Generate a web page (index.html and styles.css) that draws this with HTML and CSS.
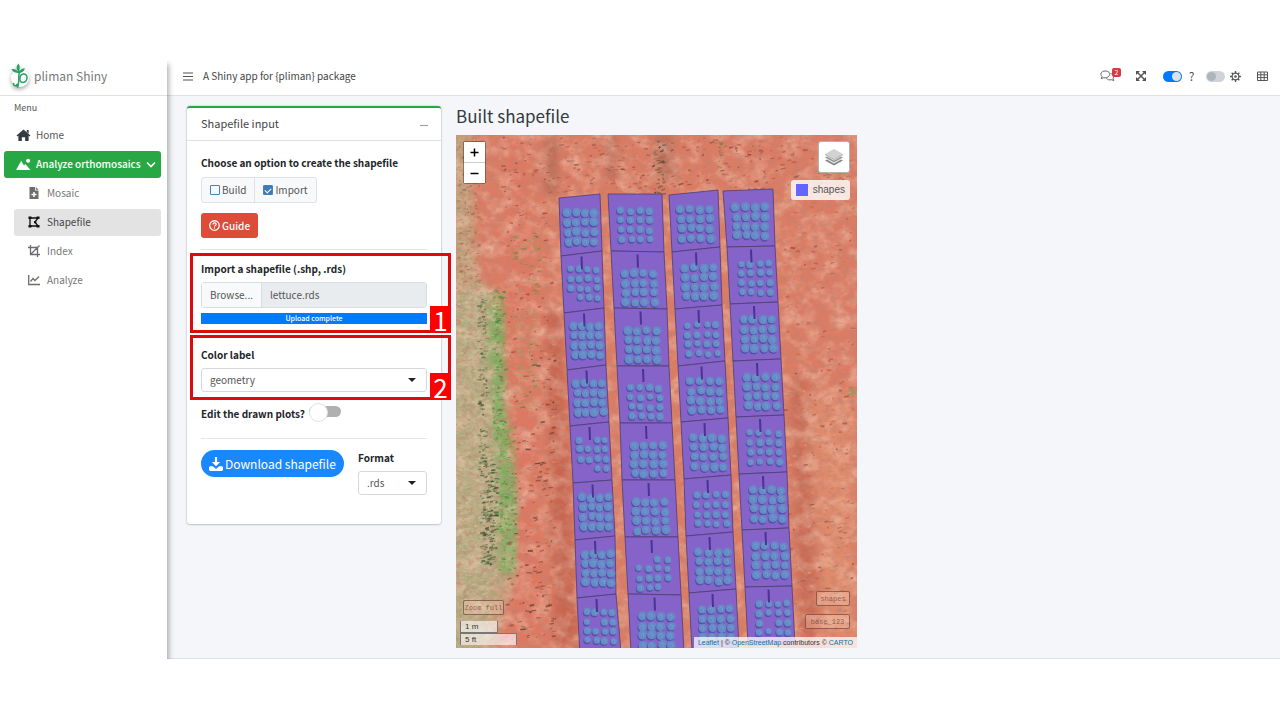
FILE: index.html
```html
<!DOCTYPE html>
<html lang="en">
<head>
<meta charset="utf-8">
<title>pliman Shiny</title>
<link rel="stylesheet" href="styles.css">
</head>
<body>
<div class="app">
  <aside class="sidebar">
    <a class="brand" href="#">
      <svg class="brand-logo" viewBox="0 0 20 26" aria-hidden="true">
        <circle cx="10" cy="15" r="9" fill="#fff"/>
        <g fill="none" stroke="#27a166" stroke-linecap="round">
          <path d="M8 24c-2-1-2-2.500 0-3M9.500 9c-1.500 4 0 9-1.500 14" stroke-width="1.500"/>
          <path d="M10 17c-1-7 7-8 7-2.500s-6 6-7 3M7.500 22c-2 1.500-4 .5-4-1.500" stroke-width="1.500"/>
        </g>
        <path d="M9 10C5 10 3 9 1.500 6c3 0 5 .5 6.500 2.500C6 6 6 3 8.500.500c1.500 2.500 1.500 5 .8 7.500C11 6 12.500 5.500 15 5.500 13.500 9 11.500 10 9 10z" fill="#27a166"/>
      </svg>
      <span>pliman Shiny</span>
    </a>
    <nav class="menu">
      <p class="menu-title">Menu</p>
      <a class="item" href="#">
        <svg class="icon home-icon" viewBox="0 0 16 14" aria-hidden="true"><path d="M8 .500 15.500 7l-.9 1-1.100-.9V13H9.800V9H6.200v4H2.500V7.100L1.400 8 .5 7z" fill="#343a40"/><path d="M11.500 1h2v4l-2-2z" fill="#343a40"/></svg>
        <span>Home</span>
      </a>
      <a class="item item-open" href="#">
        <svg class="icon home-icon" viewBox="0 0 16 14" aria-hidden="true"><path d="M0 13 5.500 3 8.500 8l1.500-1.500L15.500 13z" fill="#fff"/><circle cx="13" cy="3" r="2.200" fill="#fff"/></svg>
        <span>Analyze orthomosaics</span>
        <svg class="chevron" viewBox="0 0 10 7" aria-hidden="true"><path d="M1 1.500 5 5.500 9 1.500" fill="none" stroke="#fff" stroke-width="1.600"/></svg>
      </a>
      <a class="item sub" href="#">
        <svg class="icon" viewBox="0 0 12 12" aria-hidden="true"><path d="M1.500 0H7v3.500h3.500V12h-9z" fill="#6c6c6c"/><path d="M7.800 0 10.500 2.700H7.800z" fill="#6c6c6c"/><path d="M6 5v5M3.500 7.500h5" stroke="#fff" stroke-width="1.500"/></svg>
        <span>Mosaic</span>
      </a>
      <a class="item sub sub-active" href="#">
        <svg class="icon" viewBox="0 0 12 12" aria-hidden="true"><path d="M2 2h8L7 6l3 4H2z" fill="none" stroke="#111" stroke-width="1.300"/><path d="M.5.500h3v2.500h-3zM8.500.500h3v2.500h-3zM.5 9h3v2.500h-3zM8.500 9h3v2.500h-3zM6 5h2.200v2.200H6z" fill="#111"/></svg>
        <span>Shapefile</span>
      </a>
      <a class="item sub" href="#">
        <svg class="icon" viewBox="0 0 12 12" aria-hidden="true"><path d="M2.500 0v9.500H12M0 2.500h9.500V12M2.500 9.500 11.500.500" fill="none" stroke="#6c6c6c" stroke-width="1.300"/></svg>
        <span>Index</span>
      </a>
      <a class="item sub" href="#">
        <svg class="icon" viewBox="0 0 12 12" aria-hidden="true"><path d="M.7 1v9.500H12M2.500 7.500l2.500-3 2 2 4-4" fill="none" stroke="#6c6c6c" stroke-width="1.300"/></svg>
        <span>Analyze</span>
      </a>
    </nav>
  </aside>

  <div class="page">
    <header class="topbar">
      <button class="icon-button" type="button" aria-label="Toggle menu">
        <svg width="10" height="9" viewBox="0 0 10 9"><path d="M0 1h10M0 4.500h10M0 8h10" stroke="#555" stroke-width="1.200"/></svg>
      </button>
      <span class="topbar-title">A Shiny app for {pliman} package</span>
      <div class="tools">
        <button class="icon-button comments" type="button" aria-label="Messages">
          <svg width="15" height="12" viewBox="0 0 15 12"><g fill="none" stroke="#666" stroke-width="1"><path d="M1.200 8.500 2 6.500C-.5 4 1.500 1 5 1s5.500 2 4.500 4.300S5 8.300 3.800 7.700z"/><path d="M10.500 3.500c3 .5 4.200 3 2.500 5l.8 2-2.400-.8c-2 .5-4 .2-5-1.400"/></g></svg>
          <span class="count">2</span>
        </button>
        <button class="icon-button expand" type="button" aria-label="Full screen">
          <svg width="10" height="10" viewBox="0 0 10 10"><path d="M0 0h4L0 4zM10 0v4L6 0zM0 10V6l4 4zM10 10H6l4-4z" fill="#555"/><path d="M1 1l8 8M9 1 1 9" stroke="#555" stroke-width="1.500"/></svg>
        </button>
        <input class="switch" type="checkbox" checked aria-label="Help">
        <span class="question">?</span>
        <input class="switch switch-theme" type="checkbox" aria-label="Theme">
        <svg class="gear" width="11" height="11" viewBox="0 0 12 12" aria-hidden="true"><circle cx="6" cy="6" r="3.700" fill="none" stroke="#555" stroke-width="1.300"/><circle cx="6" cy="6" r="1.400" fill="#555"/><path d="M6 0v2.500M6 9.500V12M0 6h2.500M9.500 6H12M1.800 1.800l1.700 1.700M8.500 8.500l1.700 1.700M10.200 1.800 8.500 3.500M3.500 8.500 1.800 10.200" stroke="#555" stroke-width="1.500"/></svg>
        <button class="icon-button" type="button" aria-label="Panels">
          <svg width="11" height="10" viewBox="0 0 11 10"><path d="M.5 1h10v8.500H.5zM.5 3.800h10M.5 6.600h10M3.800 1v8.500M7.200 1v8.500" fill="none" stroke="#555"/></svg>
        </button>
      </div>
    </header>

    <main class="content">
      <section class="card">
        <header class="card-header">
          <h2 class="card-title">Shapefile input</h2>
          <button class="collapse" type="button" aria-label="Collapse"></button>
        </header>
        <form class="card-body">
          <fieldset class="choice">
            <legend class="label">Choose an option to create the shapefile</legend>
            <div class="group">
              <label class="option"><input class="tick" type="checkbox">Build</label>
              <label class="option"><input class="tick" type="checkbox" checked>Import</label>
            </div>
          </fieldset>
          <button class="guide" type="button">
            <svg width="11" height="11" viewBox="0 0 12 12" aria-hidden="true"><circle cx="6" cy="6" r="5.200" fill="none" stroke="#fff" stroke-width="1.400"/><path d="M4.300 4.800c0-2.200 3.500-2.200 3.500-.2C7.800 6 6 5.800 6 7.200M6 8v1.300" fill="none" stroke="#fff" stroke-width="1.300"/></svg>
            Guide
          </button>
          <hr class="rule">

          <div class="field marked marked-file">
            <label class="label" for="shp">Import a shapefile (.shp, .rds)</label>
            <div class="file">
              <button class="browse" type="button">Browse...</button>
              <input class="file-name" id="shp" type="text" value="lettuce.rds" readonly>
            </div>
            <div class="progress">Upload complete</div>
            <div class="mark"><span class="mark-number">1</span></div>
          </div>

          <div class="field marked marked-color">
            <label class="label" for="color">Color label</label>
            <div class="select-box">
              <select class="select" id="color"><option>geometry</option></select>
            </div>
            <div class="mark"><span class="mark-number">2</span></div>
          </div>

          <div class="edit">
            <label class="label" for="edit">Edit the drawn plots?</label>
            <input class="slide" id="edit" type="checkbox">
          </div>
          <hr class="rule">

          <div class="export">
            <button class="download" type="button">
              <svg width="14" height="14" viewBox="0 0 14 14" aria-hidden="true"><path d="M5.900 0h2.200v5h3L7 9.200 2.900 5h3z" fill="#fff"/><path d="M1.300 9.200h2.500L7 12l3.200-2.800h2.500c.7 0 1.300.6 1.300 1.300v2c0 .8-.6 1.400-1.300 1.400H1.300C.6 13.900 0 13.300 0 12.500v-2c0-.7.6-1.300 1.300-1.300z" fill="#fff"/></svg>
              Download shapefile
            </button>
            <div class="format">
              <label class="label" for="format">Format</label>
              <div class="select-box">
                <select class="select" id="format"><option>.rds</option></select>
              </div>
            </div>
          </div>
        </form>
      </section>

      <section class="result">
        <h1 class="result-title">Built shapefile</h1>
        <div class="map">
          <svg class="imagery" id="imagery" viewBox="456 135 401 513" preserveAspectRatio="xMidYMid slice" aria-label="Orthomosaic with plots">
            <defs>
              <filter id="soil" x="0" y="0" width="100%" height="100%">
                <feTurbulence type="fractalNoise" baseFrequency="0.16 0.22" numOctaves="4" seed="8"/>
                <feColorMatrix values="0 0 0 0 .5  0 0 0 0 .22  0 0 0 0 .16  1.500 0 0 0 -.63"/>
              </filter>
              <filter id="light" x="0" y="0" width="100%" height="100%">
                <feTurbulence type="fractalNoise" baseFrequency="0.06 0.07" numOctaves="4" seed="21"/>
                <feColorMatrix values="0 0 0 0 .93  0 0 0 0 .62  0 0 0 0 .47  1.200 0 0 0 -.5"/>
              </filter>
              <filter id="grass" x="0" y="0" width="100%" height="100%">
                <feTurbulence type="fractalNoise" baseFrequency="0.3" numOctaves="3" seed="4" result="n"/>
                <feColorMatrix in="n" values="0 0 0 0 .34  0 0 0 0 .4  0 0 0 0 .22  2.500 0 0 0 -1.150" result="d"/>
                <feComposite in="d" in2="SourceAlpha" operator="in" result="c"/>
                <feMerge><feMergeNode in="SourceGraphic"/><feMergeNode in="c"/></feMerge>
              </filter>
              <filter id="soft" x="-50%" y="-20%" width="200%" height="140%"><feGaussianBlur stdDeviation="4"/></filter>
            </defs>
            <rect x="456" y="135" width="401" height="513" fill="#dc7c64"/>
            <g filter="url(#soft)">
              <path d="M505 135h22l20 513h-35z" fill="#de7862"/>
              <path d="M545 135h12v60h-12zM607 135h10v45h-10zM655 135h16l5 45h-20z" fill="#b96c56"/>
              <path d="M545 310h15l20 338h-25z" fill="#c9654f"/>
              <path d="M790 380h18l12 268h-20z" fill="#cb6c55"/>
              <path d="M808 390h45v258h-30z" fill="#e08a6c"/>
            </g>
            <g filter="url(#grass)"><g filter="url(#soft)">
              <path d="M448 125h20l8 145 26 50 4 110 10 60 2 80-18 50-6 40h-48z" fill="#c99e7c"/>
              <path d="M448 290h40l16 190-8 100-20 80h-28z" fill="#bdae86"/>
              <path d="M490 290l12 20 4 110 13 80-3 70-16 10-4-130-10-100z" fill="#84ad61"/>
            </g></g>
            <rect x="456" y="135" width="401" height="513" filter="url(#light)"/>
            <rect x="456" y="135" width="401" height="513" filter="url(#soil)"/>
            <g id="specks"></g>
            <g id="plots"></g>
          </svg>
          <div class="zoom">
            <button class="zoom-button" type="button" aria-label="Zoom in"><svg width="9" height="9" viewBox="0 0 9 9"><path d="M4.500.500v8M.5 4.500h8" stroke="#000" stroke-width="1.500"/></svg></button>
            <button class="zoom-button" type="button" aria-label="Zoom out"><svg width="9" height="9" viewBox="0 0 9 9"><path d="M.5 4.500h8" stroke="#000" stroke-width="1.500"/></svg></button>
          </div>
          <div class="map-right">
            <button class="layers" type="button" aria-label="Layers">
              <svg width="18" height="18" viewBox="0 0 18 18"><path d="M0 12.500 9 17.500l9-5-2-1-7 4-7-4z" fill="#888"/><path d="M0 9.500l9 5 9-5-2-1-7 4-7-4z" fill="#999"/><path d="M9 1l9 5-9 5-9-5z" fill="#d2d2d2"/><path d="M0 6l9 5 9-5v1l-9 5-9-5z" fill="#aaa"/></svg>
            </button>
            <div class="legend"><span class="swatch"></span>shapes</div>
          </div>
          <div class="map-left-bottom">
            <button class="ghost" type="button">Zoom full</button>
            <div class="scale"><span class="scale-m">1 m</span><span class="scale-ft">5 ft</span></div>
          </div>
          <div class="map-right-bottom">
            <button class="ghost" type="button">shapes</button>
            <button class="ghost ghost-wide" type="button">base_123</button>
            <div class="credits"><a href="#">Leaflet</a> | © <a href="#">OpenStreetMap</a> contributors © <a href="#">CARTO</a></div>
          </div>
        </div>
      </section>
    </main>
  </div>
</div>
<script src="map.js"></script>
</body>
</html>
```

FILE: styles.css
```css
* { box-sizing: border-box; }

body {
  margin: 0;
  padding: 60px 0;
  background: #fff;
  color: #212529;
  font: 10px/16px "Noto Sans CJK SC", "Noto Sans", sans-serif;
}

button, input, select { font: inherit; color: inherit; margin: 0; }
button { cursor: pointer; }
a { text-decoration: none; }
svg { display: block; flex: none; }

.app { display: flex; min-height: 599px; }

.sidebar {
  position: relative;
  z-index: 1;
  flex: none;
  width: 167px;
  background: #fff;
  box-shadow: 2px 4px 5px rgba(0, 0, 0, .3);
  clip-path: inset(0 -10px 0 0);
}

.brand {
  display: flex;
  align-items: center;
  gap: 4px;
  height: 36px;
  padding: 0 0 3px 10px;
  border-bottom: 1px solid #dee2e6;
  color: #777;
  font-size: 12px;
}
.brand-logo { width: 20px; height: 26px; filter: drop-shadow(0 2px 2px rgba(0, 0, 0, .35)); }

.menu { display: flex; flex-direction: column; gap: 2px; padding: 4px 6px 0 4px; }
.menu-title { margin: 0 0 4px 10px; color: #555; font-size: 9px; }
.item {
  display: flex;
  align-items: center;
  gap: 5px;
  height: 27px;
  padding: 0 9px 1px 12px;
  border-radius: 3px;
  color: #555;
  white-space: nowrap;
}
.item-open { background: #28a745; color: #fff; font-weight: 500; }
.chevron { width: 10px; height: 7px; margin-left: auto; }
.icon { width: 12px; height: 12px; }
.home-icon { width: 15px; height: 13px; }
.sub { gap: 7px; margin-left: 10px; padding-left: 14px; color: #777; }
.sub-active { background: #e3e3e3; color: #444; }

.page {
  display: flex;
  flex: 1;
  flex-direction: column;
  min-width: 0;
  background: #f4f6f9;
  border-bottom: 1px solid #dee2e6;
}

.topbar {
  display: flex;
  align-items: center;
  height: 36px;
  padding: 0 12px 3px 16px;
  background: #fff;
  border-bottom: 1px solid #dee2e6;
}
.topbar-title { margin-left: 10px; color: #444; }
.icon-button { position: relative; padding: 0; border: 0; background: none; }
.tools { display: flex; align-items: center; margin-left: auto; }
.comments { margin-right: 21px; }
.expand { margin-right: 17px; }
.count {
  position: absolute;
  top: -2px;
  left: 12px;
  width: 9px;
  border-radius: 2px;
  background: #dc3545;
  color: #fff;
  font-size: 7px;
  line-height: 9px;
}
.switch {
  appearance: none;
  width: 19px;
  height: 11px;
  padding: 1px;
  border-radius: 6px;
  background: #ced4da;
}
.switch::before { content: ""; display: block; width: 9px; height: 9px; border-radius: 50%; background: #adb5bd; }
.switch:checked { background: #007bff; }
.switch:checked::before { margin-left: 8px; background: #dee2e6; }
.question { width: 19px; color: #555; font-size: 12px; text-align: center; }
.switch-theme { margin: 0 5px; }
.gear { margin-right: 16px; }

.content {
  display: grid;
  grid-template-columns: 254fr 401fr 388fr;
  gap: 15px;
  align-items: start;
  padding: 10px 20px;
}

.card {
  background: #fff;
  border-top: 2px solid #28a745;
  border-radius: 3px;
  box-shadow: 0 0 2px rgba(0, 0, 0, .25), 0 1px 2px rgba(0, 0, 0, .15);
}
.card-header {
  display: flex;
  align-items: center;
  justify-content: space-between;
  height: 33px;
  padding: 0 13px 2px 14px;
  border-bottom: 1px solid #dee2e6;
}
.card-title { margin: 0; color: #444; font-size: 11px; font-weight: 400; }
.collapse { width: 8px; height: 5px; padding: 0; border: 0; border-bottom: 1px solid #999; background: none; }

.card-body { padding: 14px 14px 29px; }
.label { display: block; font-weight: 700; }
.choice { margin: 0; padding: 0; border: 0; }
.choice .label { padding: 0; }
.group { display: inline-flex; margin-top: 6px; border: 1px solid #dee2e6; border-radius: 3px; background: #f8f9fa; vertical-align: top; }
.option { display: flex; align-items: center; gap: 2px; height: 24px; padding: 0 8px; color: #555; }
.option + .option { border-left: 1px solid #dee2e6; }
.tick { appearance: none; width: 10px; height: 10px; border: 1px solid #4682b4; border-radius: 1px; }
.tick:checked { background: #3f7cb2; }
.tick:checked::before {
  content: "";
  display: block;
  width: 5px;
  height: 3px;
  margin: 2px 1px;
  border: solid #fff;
  border-width: 0 0 1px 1px;
  rotate: -45deg;
}
.guide {
  display: flex;
  align-items: center;
  gap: 2px;
  height: 25px;
  margin-top: 10px;
  padding: 0 8px;
  border: 0;
  border-radius: 3px;
  background: #dd4b39;
  color: #fff;
  font-weight: 500;
}
.rule { margin: 11px 0; border: 0; border-top: 1px solid #e6e6e6; }

.marked { position: relative; }
.mark {
  position: absolute;
  inset: -8px -24px -9px -11px;
  border: 3px solid #dd0c0c;
  pointer-events: none;
}
.marked-color .mark { inset: -12px -24px -8px -11px; }
.mark-number {
  position: absolute;
  right: -3px;
  bottom: -3px;
  width: 21px;
  height: 27px;
  background: #f00;
  color: #fff;
  font-size: 26px;
  line-height: 27px;
  text-align: center;
}

.file { display: flex; height: 26px; margin-top: 5px; border: 1px solid #d9dde1; border-radius: 3px; }
.browse { padding: 0 8px; border: 0; border-right: 1px solid #d9dde1; background: #f8f9fa; color: #555; }
.file-name { flex: 1; min-width: 0; padding: 0 8px; border: 0; background: #e9ecef; color: #555; }
.progress { margin-top: 5px; background: #007bff; color: #fff; font-size: 7px; font-weight: 500; line-height: 11px; text-align: center; }
.marked-color { margin-top: 23px; }

.select-box { position: relative; margin-top: 5px; }
.select-box::after {
  content: "";
  position: absolute;
  top: 10px;
  right: 11px;
  border: 4px solid transparent;
  border-top-color: #222;
  border-bottom: 0;
  pointer-events: none;
}
.select { display: block; appearance: none; width: 100%; height: 24px; padding: 0 8px; border: 1px solid #d5d9dd; border-radius: 3px; background: #fff; color: #555; }

.edit { display: flex; align-items: center; gap: 4px; margin-top: 12px; padding-top: 2px; }
.slide { appearance: none; width: 32px; height: 11px; margin-bottom: 5px; border-radius: 6px; background: #b0b0b0; }
.slide::before {
  content: "";
  display: block;
  width: 17px;
  height: 17px;
  margin: -3px 0;
  border: 1px solid #e2e2e2;
  border-radius: 50%;
  background: #fff;
}
.edit + .rule { margin: 16px 0 11px; }
.export { display: flex; justify-content: space-between; align-items: flex-start; }
.download {
  display: flex;
  align-items: center;
  gap: 2px;
  height: 27px;
  padding: 0 8px;
  border: 0;
  border-radius: 14px;
  background: #1b87ff;
  color: #fff;
  font-size: 12px;
  white-space: nowrap;
}
.format { width: 69px; }

.result-title { margin: 0 0 9px; color: #343a40; font-size: 17px; font-weight: 400; line-height: 20px; }
.map { position: relative; overflow: hidden; aspect-ratio: 401 / 513; font-family: "Liberation Sans", Arial, sans-serif; }
.imagery { width: 100%; height: 100%; }

.zoom { position: absolute; top: 6px; left: 7px; border: 1px solid rgba(0, 0, 0, .3); border-radius: 2px; }
.zoom-button { display: flex; align-items: center; justify-content: center; width: 21px; height: 20px; padding: 0; border: 0; background: #fff; }
.zoom-button + .zoom-button { height: 21px; border-top: 1px solid #ccc; }

.map-right { position: absolute; top: 6px; right: 7px; display: flex; flex-direction: column; align-items: flex-end; gap: 7px; }
.layers { display: flex; align-items: center; justify-content: center; width: 32px; height: 32px; padding: 0; border: 1px solid rgba(0, 0, 0, .3); border-radius: 3px; background: #fff; }
.legend { display: flex; align-items: center; gap: 5px; height: 20px; padding: 0 5px; border-radius: 3px; background: rgba(255, 255, 255, .8); color: #555; font-size: 10px; }
.swatch { width: 12px; height: 12px; background: #6464ff; }

.map-left-bottom { position: absolute; bottom: 3px; left: 4px; }
.ghost { display: block; width: 34px; height: 15px; padding: 0; border: 1px solid rgba(90, 50, 40, .6); border-radius: 2px; background: rgba(255, 210, 190, .3); color: rgba(90, 50, 40, .65); font: 7px/12px "Liberation Mono", monospace; }
.ghost-wide { width: 45px; }
.map-left-bottom .ghost { margin: 0 0 6px 3px; width: 41px; }
.scale { color: #333; font-size: 8px; line-height: 11px; }
.scale-m, .scale-ft { display: block; padding-left: 4px; border: 1px solid #777; border-top: 0; background: rgba(255, 255, 255, .6); }
.scale-m { width: 38px; }
.scale-ft { width: 57px; border-top: 1px solid #777; border-bottom: 0; }
.map-right-bottom { position: absolute; right: 0; bottom: 0; display: flex; flex-direction: column; align-items: flex-end; gap: 8px; }
.map-right-bottom .ghost { margin-right: 7px; }
.credits { padding: 0 4px; background: rgba(255, 255, 255, .75); color: #333; font-size: 7px; line-height: 11px; }
.credits a { color: #0078a8; }
```

FILE: map.js
```js
// Plot boundaries per column: [left x, left y, right x, right y], top to bottom.
const columns = [
  { dx: 7, dy: 14, edges: [[559,198,600,194],[561,256,602,251],[564,313,604,308],[567,370,606,365],[570,426,609,422],[573,483,612,480],[575,540,615,536],[577,598,616,594],[580,656,621,652]] },
  { dx: 11, dy: 20, edges: [[608,194,662,194],[611,251,664,252],[614,308,667,309],[617,366,669,366],[620,423,672,423],[622,480,675,480],[625,537,678,537],[628,594,681,595],[631,652,684,652]] },
  { dx: 10, dy: 16, edges: [[669,195,718,190],[672,252,720,247],[675,309,722,305],[678,366,725,361],[681,422,728,418],[684,479,731,475],[686,536,733,532],[689,593,736,589],[692,651,739,647]] },
  { dx: 11, dy: 15, edges: [[723,191,773,189],[727,247,775,246],[730,304,778,302],[733,361,781,359],[736,417,784,415],[739,474,787,472],[742,530,789,528],[745,587,792,586],[748,645,795,644]] }
];

let state = 17;
const random = () => (state = (state * 16807) % 2147483647) / 2147483647;

let plots = "";
columns.forEach((column, c) => {
  for (let r = 0; r < 8; r++) {
    const [ax, ay, bx, by] = column.edges[r];
    const [cx, cy, dx, dy] = column.edges[r + 1];
    plots += `<path d="M${ax} ${ay}L${bx} ${by} ${dx} ${dy} ${cx} ${cy}z" fill="#8563c8" stroke="#4b3f75" stroke-width=".8"/>`;
    const top = (ay + by) / 2;
    const startY = top + (r ? column.dy : 15) + 1;
    const startX = ax + column.dx + (r ? 2 : 1);
    const small = (r + c) % 3 === 1;
    for (let i = 0; i < 4; i++) {
      for (let j = 0; j < 4; j++) {
        if (small && random() < .04) continue;
        const x = startX + j * (c ? 9.500 : 8.500) + i * .4 + random() * 1.600;
        const y = startY + i * 9.500 + random() * 1.800;
        const size = (small ? 3.200 : 4) + random() * .7;
        plots += `<circle cx="${x - .8}" cy="${y + 1.400}" r="${size}" fill="#5450a8"/>`;
        plots += `<circle cx="${x}" cy="${y}" r="${size}" fill="#668ac6"/>`;
        plots += `<path d="M${x - 2} ${y}l2-2 1.500 2-1 2" fill="none" stroke="#74a0cc" stroke-width=".9"/>`;
      }
    }
    if (r) {
      const x = ax + (bx - ax) * .5;
      plots += `<path d="M${x} ${top + 3}l.5 13" stroke="#493494" stroke-width="2"/>`;
    }
  }
});
document.getElementById("plots").innerHTML = plots;

// Clods, shadows and weeds scattered over the soil.
let specks = "";
const scatter = (count, x, y, w, h, colors, length) => {
  for (let i = 0; i < count; i++) {
    const px = x + random() * w;
    const py = y + random() * h;
    const color = colors[Math.floor(random() * colors.length)];
    specks += `<path d="M${px} ${py}l${1 + random() * length} ${random() * 2 - 1.500}" stroke="${color}" stroke-width="${.6 + random() * 1.400}" opacity="${.3 + random() * .5}"/>`;
  }
};
scatter(260, 500, 138, 350, 55, ["#a14f3e", "#b95b48", "#8a4438"], 4);
scatter(260, 782, 200, 70, 445, ["#a14f3e", "#b95b48", "#e79c79"], 4);
scatter(260, 505, 200, 48, 440, ["#a14f3e", "#8a4438", "#dd9a72"], 4);
scatter(60, 514, 340, 40, 300, ["#693a2e", "#5b3c31"], 5);
scatter(160, 512, 310, 25, 100, ["#b8a069", "#9ba15e"], 4);
scatter(70, 510, 235, 30, 60, ["#a89557", "#7f8748"], 4);
scatter(220, 456, 138, 24, 150, ["#c9b98b", "#8f6b50", "#a67557"], 3);
scatter(700, 456, 290, 40, 350, ["#c9c9a0", "#9aa374", "#d0bf94", "#a9a87c"], 3);
scatter(300, 492, 290, 12, 150, ["#65b44f", "#7dbb5e", "#4f8340"], 3);
scatter(260, 498, 420, 16, 150, ["#65b44f", "#8abb62", "#4f8340"], 3);
scatter(110, 477, 300, 9, 170, ["#4f6c43", "#64774d", "#454f3a"], 3);
scatter(160, 480, 460, 16, 105, ["#3f6138", "#556b43", "#35452f"], 4);
scatter(50, 652, 140, 12, 55, ["#6c6043", "#493d30", "#b9a06a"], 3);
scatter(30, 717, 140, 5, 28, ["#b99a68", "#8d6d4b"], 3);
scatter(12, 846, 388, 8, 8, ["#8ea05a"], 4);
document.getElementById("specks").innerHTML = specks;
```
